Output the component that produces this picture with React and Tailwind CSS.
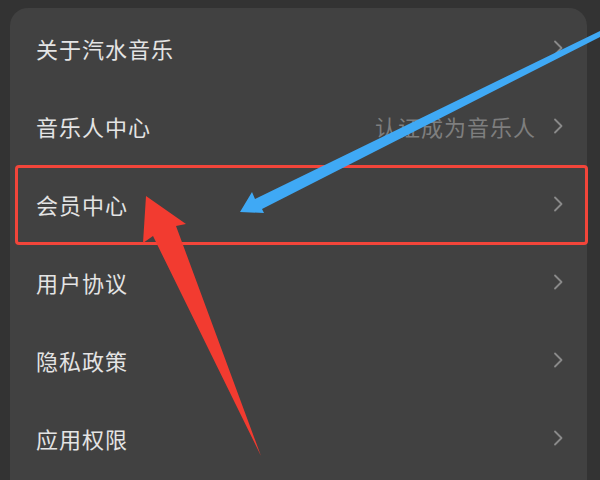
import React from 'react';

const rows = [
  { label: '关于汽水音乐' },
  { label: '音乐人中心', hint: '认证成为音乐人' },
  { label: '会员中心' },
  { label: '用户协议' },
  { label: '隐私政策' },
  { label: '应用权限' },
];

const Chevron = () => (
  <svg width="10" height="16" viewBox="0 0 10 16" fill="none">
    <path d="M2 1.5 L8.5 8 L2 14.5" stroke="#8a8a8a" strokeWidth="1.8" strokeLinecap="round" strokeLinejoin="round" />
  </svg>
);

const App = () => {
  return (
    <div
      className="relative w-[600px] h-[480px] overflow-hidden bg-[#333333] pt-[8px] pl-[10px] pr-[13px]"
      style={{ fontFamily: '"Noto Sans CJK SC", "Noto Sans", sans-serif' }}
    >
      {/* Settings card */}
      <div className="h-full bg-[#414141] rounded-tl-[18px] rounded-tr-[18px] pt-[1px] pl-[26px] pr-[24px]">
        {rows.map((row) => (
          <div key={row.label} className="h-[78px] flex items-center justify-between">
            <span className="text-[22px] text-[#e4e4e4] tracking-[1px]">{row.label}</span>
            <div className="flex items-center gap-[17px]">
              {row.hint && <span className="text-[22px] text-[#7e7e7e] tracking-[1px]">{row.hint}</span>}
              <Chevron />
            </div>
          </div>
        ))}
      </div>

      {/* Annotation: highlight box */}
      <div className="absolute left-[15px] top-[165px] w-[573px] h-[80px] border-[3px] border-[#f2453a] rounded-[4px]" />

      {/* Annotation: arrows */}
      <svg className="absolute left-0 top-0" width="600" height="480" viewBox="0 0 600 480">
        <polygon
          points="600,31 600,37 262,209 264,213 240,212 252,192 255,199"
          fill="#3fa9f5"
        />
        <polygon
          points="146,196 186,224 176,226 261,456 153,236 143,243"
          fill="#f23b30"
        />
      </svg>
    </div>
  );
};

export default App;
